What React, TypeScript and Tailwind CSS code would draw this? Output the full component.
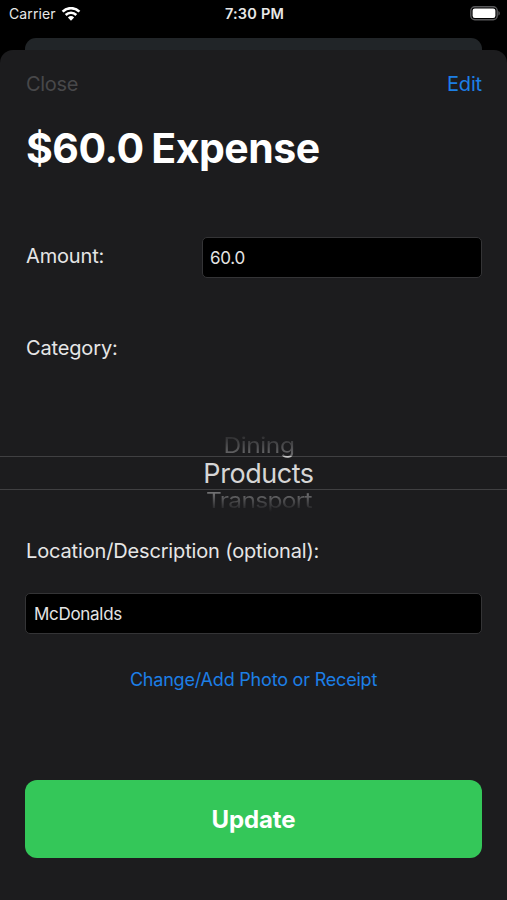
import { useState } from 'react';

const inputClass =
  'h-[41px] rounded-[5px] border border-[#343436] bg-black text-[17px] tracking-[-0.3px] text-[#e4e4e4] outline-none';

function StatusBar() {
  return (
    <div className="grid h-[38px] grid-cols-3 items-start pr-[7px] pl-[9px] text-[14px] leading-[28px] text-[#e8e8e8]">
      <div className="flex items-center gap-[5px]">
        <span className="tracking-[0.1px]">Carrier</span>
        <svg width="20" height="15" viewBox="0 0 20 15" fill="none" stroke="#fff" strokeWidth="2.6">
          <path d="M1.6 4.6a12 12 0 0 1 16.8 0" />
          <path d="M4.7 8a7.5 7.5 0 0 1 10.6 0" />
          <path d="M10 13.7 6.9 10.5a4.5 4.5 0 0 1 6.2 0Z" fill="#fff" stroke="none" />
        </svg>
      </div>
      <span className="text-center text-[14.5px] font-semibold tracking-[0.2px]">7:30 PM</span>
      <div className="flex h-[27px] items-center justify-end">
        <svg width="30" height="15" viewBox="0 0 30 15" fill="none">
          <rect x="0.8" y="0.8" width="26.4" height="13" rx="4" stroke="#59595b" strokeWidth="1.4" />
          <rect x="2.6" y="2.6" width="22.8" height="9.4" rx="2.2" fill="#fff" />
          <path d="M28.4 5v4.6c.9-.4 1.4-1.3 1.4-2.3s-.5-1.9-1.4-2.3Z" fill="#59595b" />
        </svg>
      </div>
    </div>
  );
}

function CategoryPicker() {
  return (
    <div className="mt-[70px] flex h-[83px] flex-col overflow-hidden pt-[4px] text-center whitespace-nowrap">
      <div className="flex h-[20px] shrink-0 items-end justify-center">
        <span className="relative top-[3px] left-[5.5px] origin-bottom scale-y-[0.88] bg-linear-to-b from-[#303032] from-20% via-[#6a6a6c] via-89% to-[#c8c8c8] to-89% bg-clip-text text-[24.5px] leading-[32px] tracking-[-0.4px] text-transparent">
          Dining
        </span>
      </div>
      <div className="flex h-[34px] shrink-0 items-center justify-center border-y border-[#404042] pt-[2px] pl-[10px] text-[27px] leading-[30px] tracking-[-0.45px] text-[#d6d6d6]">
        Products
      </div>
      <div className="flex h-[21px] shrink-0 items-start justify-center">
        <span className="relative top-[-4px] left-[5.5px] origin-top scale-y-[0.88] bg-linear-to-b from-[#707072] from-25% to-[#1c1c1e] to-92% bg-clip-text text-[24.5px] leading-[32px] tracking-[-0.7px] text-transparent">
          Transport
        </span>
      </div>
    </div>
  );
}

export default function App() {
  const [amount, setAmount] = useState('60.0');
  const [location, setLocation] = useState('McDonalds');

  return (
    <div className="flex h-[900px] w-[507px] flex-col overflow-hidden bg-black font-['Inter',sans-serif]">
      <StatusBar />
      <div className="mx-[25px] h-[12px] shrink-0 rounded-t-[11px] bg-[#212528]" />
      <div className="flex flex-1 flex-col rounded-t-[13px] bg-[#1c1c1e] text-[20px] tracking-[-0.15px] text-[#e6e6e6]">
        <header className="flex h-[68px] items-center justify-between pr-[25px] pl-[26px]">
          <button className="tracking-[-0.3px] text-[#48484a]">Close</button>
          <button className="text-[#1c7fe6]">Edit</button>
        </header>
        <h1 className="h-[60px] px-[26px] text-[41px] leading-[60px] font-bold tracking-[-0.5px] text-white [word-spacing:-1.5px]">
          $60.0 Expense
        </h1>
        <div className="mt-[59px] flex items-center justify-between pr-[25px] pl-[26px]">
          <label htmlFor="amount" className="relative top-[-2px]">Amount:</label>
          <input
            id="amount"
            value={amount}
            onChange={(e) => setAmount(e.target.value)}
            className={`${inputClass} w-[280px] px-[7px]`}
          />
        </div>
        <div className="mt-[56px] h-[28px] px-[26px] leading-[28px]">Category:</div>
        <CategoryPicker />
        <label htmlFor="location" className="mt-[22px] h-[28px] px-[26px] leading-[28px]">
          Location/Description (optional):
        </label>
        <input
          id="location"
          value={location}
          onChange={(e) => setLocation(e.target.value)}
          className={`${inputClass} mx-[25px] mt-[28px] px-[8px]`}
        />
        <button className="mt-[34px] h-[24px] text-[18px] leading-[24px] tracking-[-0.2px] text-[#1c7fe6]">
          Change/Add Photo or Receipt
        </button>
        <button className="mx-[25px] mt-[88px] h-[78px] rounded-[12px] bg-[#34c759] pt-[1px] text-[24px] font-bold tracking-[-0.1px] text-white">
          Update
        </button>
      </div>
    </div>
  );
}
